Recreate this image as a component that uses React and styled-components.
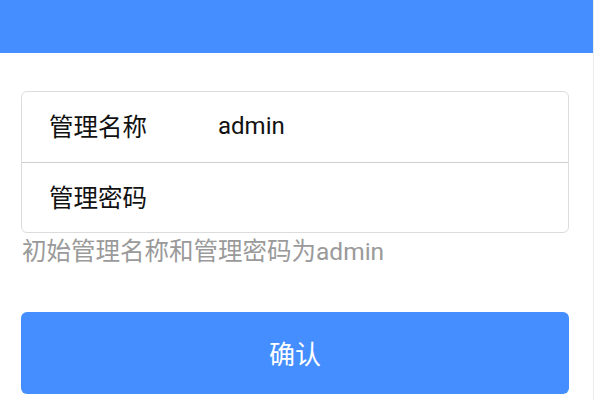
import React from "react";
import styled, { createGlobalStyle } from "styled-components";

const Global = createGlobalStyle`
  html, body { margin: 0; padding: 0; background: #fff; }
  body { font-family: Roboto, "Noto Sans CJK SC", sans-serif; }
  * { box-sizing: border-box; }
`;

const Page = styled.div`
  width: 594px;
  height: 400px;
  border-right: 1px solid #ececec;
  background: #fff;
  overflow: hidden;
`;

const Header = styled.div`
  height: 53px;
  background: #458eff;
`;

const Content = styled.div`
  padding: 38px 24px 0 21px;
  display: flex;
  flex-direction: column;
`;

const Card = styled.div`
  border: 1px solid #dcdcdc;
  border-radius: 6px;
  background: #fff;
`;

const Row = styled.div`
  height: 70px;
  display: flex;
  align-items: center;
  padding: 0 0 3px 27px;
  border-top: ${(p) => (p.$first ? "none" : "1px solid #cfcfcf")};
`;

const Label = styled.span`
  width: 169px;
  font-size: 24.5px;
  color: #111;
  font-family: Roboto, "Noto Sans CJK SC", sans-serif;
`;

const Value = styled.span`
  font-size: 24px;
  color: #111;
  font-family: Roboto, "Noto Sans CJK SC", sans-serif;
`;

const Hint = styled.div`
  margin-top: 5px;
  margin-left: 1px;
  font-size: 24.5px;
  line-height: 28px;
  color: #9a9a9a;
  font-family: Roboto, "Noto Sans CJK SC", sans-serif;
`;

const Button = styled.button`
  margin-top: 46px;
  height: 82px;
  width: 100%;
  border: none;
  border-radius: 6px;
  background: #458eff;
  color: #fff;
  font-size: 26px;
  font-family: Roboto, "Noto Sans CJK SC", sans-serif;
  display: flex;
  align-items: center;
  justify-content: center;
  padding: 0 0 2px;
`;

export default function App() {
  return (
    <>
      <Global />
      <Page>
        <Header />
        <Content>
          <Card>
            <Row $first>
              <Label>管理名称</Label>
              <Value>admin</Value>
            </Row>
            <Row>
              <Label>管理密码</Label>
            </Row>
          </Card>
          <Hint>初始管理名称和管理密码为admin</Hint>
          <Button>确认</Button>
        </Content>
      </Page>
    </>
  );
}
